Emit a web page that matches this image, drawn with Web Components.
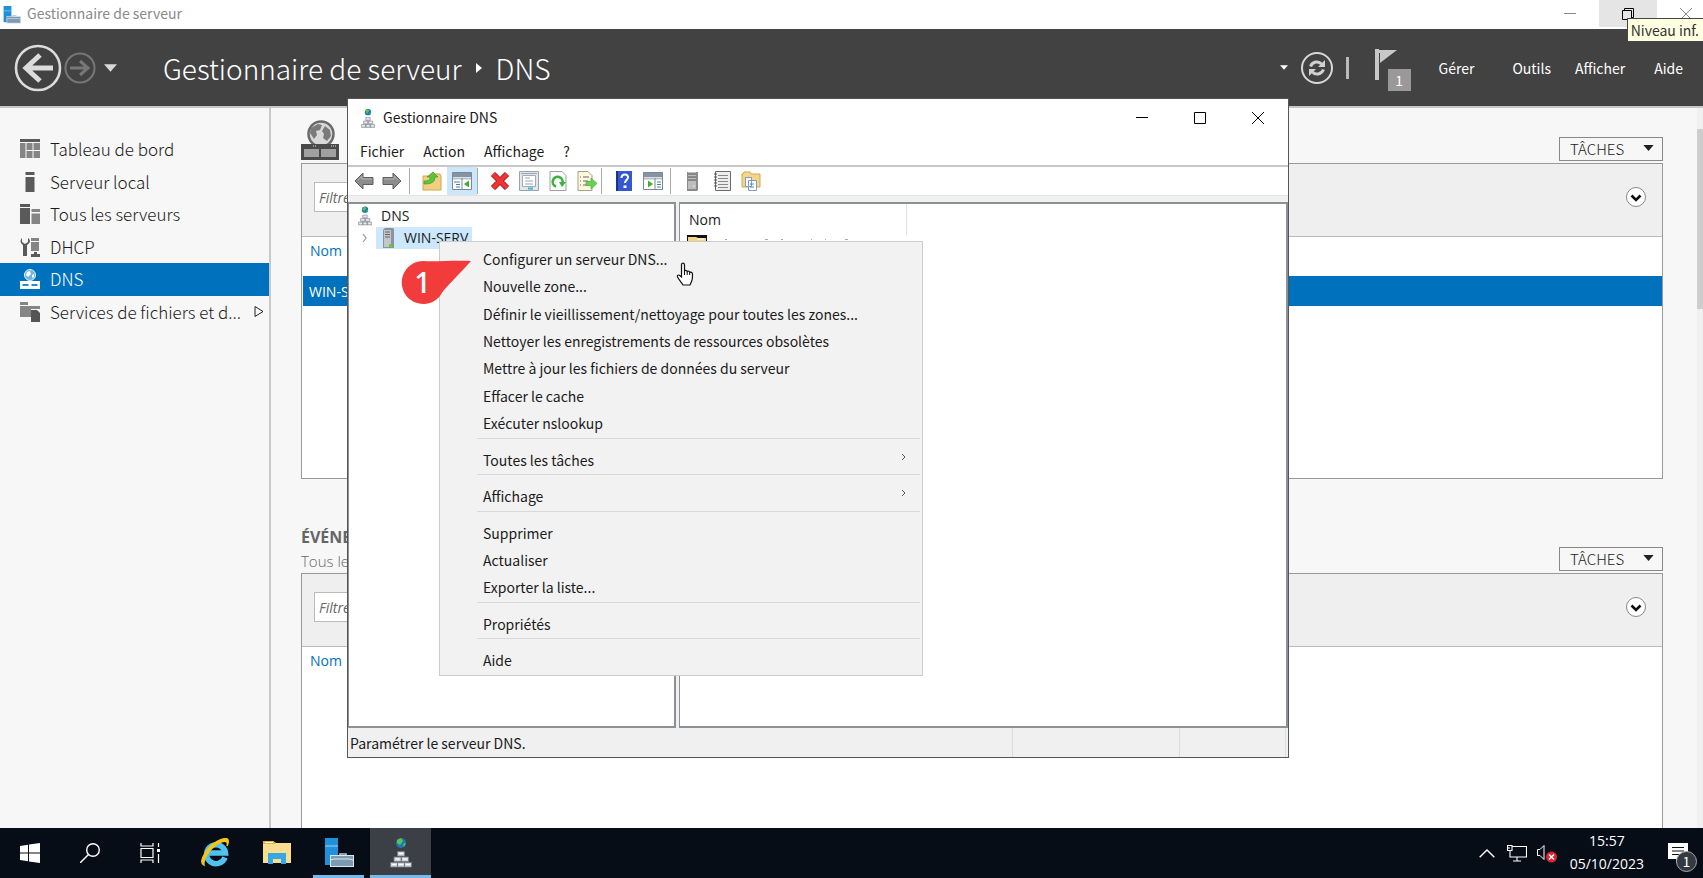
<!DOCTYPE html>
<html lang="fr">
<head>
<meta charset="utf-8">
<title>Gestionnaire de serveur</title>
<style>
html, body { margin: 0; height: 100%; overflow: hidden; }
body { --wide: "Open Sans", sans-serif; font-family: "Noto Sans CJK SC", "Open Sans", sans-serif; font-size: 14px; color: #1b1b1b; background: #f7f7f7; }
</style>
</head>
<body>
<desk-top></desk-top>
<script>
const ICONS = {
  toolbox: ['0 0 30 30', '<path d="M1 0h13v27H1z" fill="#1e90dc"/><path d="M1 8h13" stroke="#9fd3f5"/><path d="M16 18v-2h6v2" fill="none" stroke="#b9cad6" stroke-width="1.6"/><rect x="6.500" y="17.500" width="23" height="11" fill="#7d9bb0" stroke="#dbe6ee"/><path d="M6 22l4-1h16l3 1" fill="none" stroke="#dbe6ee"/>'],
  back: ['0 0 48 48', '<circle cx="24" cy="24" r="22" fill="none" stroke="#dcdcdc" stroke-width="2.600"/><path d="M39 24H13M26 11L12 24l14 13" fill="none" stroke="#dcdcdc" stroke-width="5"/>'],
  forward: ['0 0 32 32', '<circle cx="16" cy="16" r="14.500" fill="none" stroke="#777" stroke-width="2"/><path d="M6 16h17M16 9l8 7-8 7" fill="none" stroke="#777" stroke-width="3"/>'],
  caret: ['0 0 12 7', '<path d="M0 0h12L6 7z" fill="currentColor"/>'],
  crumb: ['0 0 6 10', '<path d="M0 0l6 5-6 5z" fill="#fff"/>'],
  refresh: ['0 0 32 32', '<circle cx="16" cy="16" r="15" fill="none" stroke="#d8d8d8" stroke-width="2"/><g fill="none" stroke="#d0d0d0" stroke-width="3"><path d="M9.500 14.500c2-5 8-6 11-2.500"/><path d="M22.500 17.500c-2 5-8 6-11 2.500"/></g><path d="M24 8v7h-7zM8 24v-7h7z" fill="#d0d0d0"/>'],
  flag: ['0 0 22 31', '<path d="M0 0h4v31H0z" fill="#c8c8c8"/><path d="M3 1h19L5 14V4H3z" fill="#c8c8c8"/>'],
  dashboard: ['0 0 20 20', '<path d="M0 0h20v3H0z" fill="#5a5a5a"/><path d="M0 4h5.500V19H0zM6.500 4h6v7h-6zM13.500 4H20v7h-6.500zM6.500 12h6v7h-6zM13.500 12H20v7h-6.500z" fill="#858585"/>'],
  local: ['0 0 20 20', '<path d="M5.500 0h9v3h-9zM5.500 5h9v15h-9z" fill="#5a5a5a"/>'],
  servers: ['0 0 20 20', '<path d="M0 0h10v3H0zM0 4h10v16H0z" fill="#5a5a5a"/><path d="M11.500 5H20v3h-8.500zM11.500 9.500H20V20h-8.500z" fill="#858585"/>'],
  dhcp: ['0 0 20 20', '<path d="M2 1v4l3 2 3-2V1c3 2 2.500 5-1 7v11H3V8C0 6 0 3 2 1z" fill="#5a5a5a"/><path d="M11 1h8v3h-8zM11 5h8v9h-8z" fill="#858585"/><path d="M14 15h3v2h3v3h-9v-3h3z" fill="#5a5a5a"/>'],
  dnsrole: ['0 0 20 20', '<circle cx="10" cy="6" r="5.500" fill="#6db4e6" stroke="#e8f4fc"/><path d="M7 3l3-1 1 3-3 3-2-2zM12 6l2-1v3l-2 1z" fill="#fff"/><path d="M0 12h20v8H0z" fill="#fff"/><path d="M2.500 16h6M11.500 16h6" stroke="#2b8bd0" stroke-width="2"/>'],
  files: ['0 0 20 20', '<path d="M0 0h8v3H0zM0 4h20v3h-9v8H0z" fill="#858585"/><path d="M11 8h6l3 3v9h-9z" fill="#555"/>'],
  expand: ['0 0 10 13', '<path d="M1 1.500l8 5-8 5z" fill="none" stroke="#222"/>'],
  globe: ['0 0 38 40', '<circle cx="20" cy="14" r="12.500" fill="#d8d8d8" stroke="#6a6a6a" stroke-width="2.500"/><path d="M10 8l7-4 4 1-2 5-4 1 1 4-3 4-4-6zM24 6l5 4 1 6-4 5-4-3 1-4-2-3z" fill="#7a7a7a"/><path d="M0 24h38v16H0z" fill="#4a4a4a"/><path d="M3 29h15v8H3zM20 29h15v8H20z" fill="#a0a0a0"/><path d="M12 26h4M30 26h5" stroke="#ddd" stroke-dasharray="1 1"/>'],
  chevron: ['0 0 20 20', '<circle cx="10" cy="10" r="9.500" fill="#fff" stroke="#888"/><path d="M5.500 8.500L10 13l4.500-4.500" fill="none" stroke="#111" stroke-width="2.600"/>'],
  min: ['0 0 12 12', '<path d="M0 5.500h12" stroke="currentColor"/>'],
  max: ['0 0 12 12', '<path d="M.5.5h11v11H.5z" fill="none" stroke="currentColor"/>'],
  restore: ['0 0 12 12', '<path d="M.5 2.500h9v9h-9zM2.500 2.500v-2h9v9h-2" fill="none" stroke="currentColor"/>'],
  close: ['0 0 12 12', '<path d="M0 0l12 12M12 0L0 12" stroke="currentColor"/>'],
  dns: ['0 0 22 30', '<circle cx="11" cy="5" r="5" fill="#1c78b8"/><path d="M7 2l4-2 2 3-3 4-3-2zM13 6l3-1-2 4z" fill="#5cc24a"/><g fill="#d3d6dc" stroke="#747986" stroke-width=".8"><path d="M7.500 13.500h7V18h-7zM4 19h7v4.500H4zM11.500 19h7v4.500h-7zM.5 24.500h7V29h-7zM7.500 24.500h7V29h-7zM14.500 24.500h7V29h-7z"/></g><path d="M9 15.500h4M5.500 21h4M13 21h4M2 26.500h4M9 26.500h4M16 26.500h4" stroke="#fff"/>'],
  tower: ['0 0 11 20', '<path d="M0 2l2-2h8l1 1v19H0z" fill="#8d9198"/><path d="M1 2h7v17H1z" fill="#c3c6ca"/><path d="M2 4h5M2 6.500h5M2 9h5" stroke="#5d6168"/><path d="M6 16h3v3H6z" fill="#54d62c"/>'],
  server: ['0 0 11 20', '<path d="M0 1h11v18l-1 1H0z" fill="#8a8a8a"/><path d="M1 1h8v17H1z" fill="#bdbdbd"/><path d="M1 3h8M1 6h8M1 9h8" stroke="#505050"/><path d="M6 15h2" stroke="#eee"/>'],
  left: ['0 0 20 20', '<path d="M1 10l8-8v4.500h10v7H9V18z" fill="#8c8c8c" stroke="#5e5e5e"/><path d="M4 9l4-3.500V8h10" fill="none" stroke="#b5b5b5"/>'],
  right: ['0 0 20 20', '<path d="M19 10l-8-8v4.500H1v7h10V18z" fill="#8c8c8c" stroke="#5e5e5e"/><path d="M2 8h10V5.500L16 9" fill="none" stroke="#b5b5b5"/>'],
  upfolder: ['0 0 20 20', '<path d="M1 5h8l2-2h7l1 2v14H1z" fill="#f0d080" stroke="#d0a850"/><path d="M2 10c5 0 6-1 6-4H5l6-5 5 5h-3c0 5-3 7-11 7z" fill="#5cc43c" stroke="#3f9a2b" stroke-width=".7"/>'],
  tree: ['0 0 20 20', '<path d="M.5 1.500h19v17H.5z" fill="#fff" stroke="#7b8794"/><path d="M1 2h18v4H1z" fill="#8593a3"/><path d="M1 7.500h18" stroke="#b5c0cb" stroke-width="2"/><path d="M10 7v12" stroke="#7b8794"/><path d="M2 11h6M4 13.500h4M4 16h4" stroke="#4b7cb0"/><path d="M17 9.500v7L12 13z" fill="#3fae2a"/>'],
  delete: ['0 0 20 20', '<path d="M3 3l14 14M17 3L3 17" stroke="#b81616" stroke-width="6"/><path d="M3 3l14 14M17 3L3 17" stroke="#ee3535" stroke-width="4"/>'],
  props: ['0 0 20 20', '<path d="M.5.5h19v19H.5z" fill="#e4e7ea" stroke="#9aa3ac"/><path d="M3.500 4.500h13v11h-13z" fill="#fff" stroke="#a0abb5"/><path d="M2 2.500h16" stroke="#9aa7b3"/><path d="M6 7h5M6 10h8M6 13h8" stroke="#9aa7b3"/><path d="M9 17.500h5" stroke="#35b6dc" stroke-width="2"/>'],
  reload: ['0 0 20 20', '<path d="M2 .5h12l4 4v15H2z" fill="#fafafa" stroke="#a0a0a0"/><path d="M8 15.500A5 5 0 1 1 14.500 12" fill="none" stroke="#3cb043" stroke-width="2.600"/><path d="M11 11h7l-4 5z" fill="#3cb043"/>'],
  export: ['0 0 20 20', '<path d="M1 .5h10l4 4v15H1z" fill="#fdf8df" stroke="#a79f7c"/><path d="M3 6h1M6 6h6M3 10h1M6 10h5M3 14h1M6 14h5" stroke="#666"/><path d="M9 10.500h5V7l6 5.500L14 18v-3.500H9z" fill="#6cd050" stroke="#48b034" stroke-width=".7"/>'],
  help: ['0 0 20 20', '<path d="M2 0h16v20H2z" fill="#3558cc"/><path d="M2 0h2v20H2z" fill="#17348f"/><path d="M7.500 7c0-5 7-4.500 6.500-.5-.3 2.500-3 2.500-3 5.500" fill="none" stroke="#fff" stroke-width="2"/><path d="M9.500 14.500h3v2.500h-3z" fill="#fff"/>'],
  pane: ['0 0 20 20', '<path d="M.5 1.500h19v17H.5z" fill="#fff" stroke="#7b8794"/><path d="M1 2h18v4H1z" fill="#8593a3"/><path d="M1 7.500h18" stroke="#b5c0cb" stroke-width="2"/><path d="M12 7v12" stroke="#7b8794"/><path d="M14 11h4M14 13.500h4M14 16h4" stroke="#4b7cb0"/><path d="M5 9.500v7l5-3.500z" fill="#3fae2a"/>'],
  list: ['0 0 20 20', '<path d="M3.500.5h15v19h-15z" fill="#eee" stroke="#6b6b6b"/><path d="M6 4.500h10M6 7.500h10M6 10.500h10M6 13.500h10M6 16.500h10" stroke="#888"/><path d="M2 3h3M2 6h3M2 9h3M2 12h3M2 15h3" stroke="#555"/>'],
  folderdoc: ['0 0 20 20', '<path d="M1 3h1l1-2h6l1 2h9v13H1z" fill="#f4d68a" stroke="#d0a850"/><path d="M4.500 6.500h6v9h-6zM7.500 9.500h8v10h-8z" fill="#fff" stroke="#7d9cc4"/><path d="M9 13h4M9 16h4" stroke="#4a86c7"/>'],
  twisty: ['0 0 5 8', '<path d="M1 0l3 4-3 4" fill="none" stroke="#999" stroke-width="1.200"/>'],
  sub: ['0 0 4 6', '<path d="M0 0l3 3-3 3" fill="none" stroke="#555"/>'],
  zone: ['0 0 20 20', '<path d="M0 0h20v20H0z" fill="#111"/><path d="M1 2h8l2 1h8v17H1z" fill="#f2d487"/><path d="M10 4h7" stroke="#fff"/>'],
  hand: ['0 0 18 24', '<path d="M6 1.500c1.500-.8 2.500 0 2.500 1.500v6c1-1 2.500-.5 2.700.6 1-.8 2.300-.3 2.500.8 1.200-.6 2.800 0 2.800 1.700 0 3 .3 5-1 7.500L14 23H7c-1.500-2.500-3.500-4.500-5.500-8-.7-1.800 1-2.500 2.200-1.500L5.500 15V3c0-.8 0-1.200.5-1.500z" fill="#fff" stroke="#111" stroke-width="1.200"/><path d="M8.500 9v4M11.200 9.800V13M13.700 10.500V13" stroke="#111"/>'],
  pin: ['0 0 72 46', '<path d="M70 2C50 1 38 3 22 2a21.500 21.500 0 1 0 17 35C44 28 56 18 70 2z" fill="#f23b3b"/>'],
  start: ['0 0 20 20', '<path d="M0 3l8-1.200v7.700H0zM9 1.600L20 0v9.500H9zM0 10.500h8v7.700L0 17zM9 10.500h11V20L9 18.400z" fill="#fff"/>'],
  search: ['0 0 20 20', '<circle cx="13" cy="7" r="6.300" fill="none" stroke="#fff" stroke-width="1.400"/><path d="M8.500 11.500L0 20" stroke="#fff" stroke-width="1.400"/>'],
  task: ['0 0 20 20', '<path d="M1 5.500h12v9H1zM1 0v3h12V0M1 20v-3h12v3M18.500 0v4M18.500 11v9" fill="none" stroke="#fff" stroke-width="1.200"/><path d="M17 6h3v3h-3z" fill="#fff"/>'],
  ie: ['0 0 30 30', '<path d="M25 19.500A9.500 9.500 0 1 1 25.500 15H8" fill="none" stroke="#4fc3ee" stroke-width="5.500"/><path d="M4 27C-3 24 8 8 18 3s12-2 9 5c2-7-5-5-11-1S3 20 4 27z" fill="#f5c518" stroke="#f5c518" stroke-width="1.400"/>'],
  folder: ['0 0 28 24', '<path d="M0 0h10l3 2h15v20H0z" fill="#f9de90"/><path d="M0 0h10l3 3H0z" fill="#e8b52f"/><path d="M2 1.500h8" stroke="#fff"/><path d="M5 12h18v11h-5v-5h-8v5H5z" fill="#35a7e4"/>'],
  up: ['0 0 16 9', '<path d="M.7 8.300L8 1l7.300 7.300" fill="none" stroke="#fff" stroke-width="1.400"/>'],
  network: ['0 0 20 17', '<path d="M5 1.500h14.500v10.500H3V6M.5.500h4.500v5H.5zM10 12v4M6 16h8M2 2v2" fill="none" stroke="#fff" stroke-width="1.100"/>'],
  sound: ['0 0 20 20', '<path d="M.5 6.500H3l4-4v14l-4-4H.5z" fill="none" stroke="#fff"/><circle cx="14.500" cy="14" r="5.500" fill="#dc2430"/><path d="M12 11.500l5 5M17 11.500l-5 5" stroke="#fff" stroke-width="1.500"/>'],
  note: ['0 0 20 20', '<path d="M0 0h20v16h-7l-5 4v-4H0z" fill="#fff"/><path d="M4 4.500h12M4 8h12M4 11.500h8" stroke="#111" stroke-width="1.200"/>'],
  tips: ['0 0 130 2', '<path d="M6 1.500h2M46 1.500h3M62 1.500h2M92 1.500h1M106 1.500h1M126 1.500h3" stroke="#aaa"/>']
};

function define(name, css, html) {
  const tpl = document.createElement('template');
  tpl.innerHTML = `<style>*{box-sizing:border-box}button,input,select{font:inherit;color:inherit;border:0;background:none;padding:0;margin:0}a{color:inherit;text-decoration:none}${css}</style>${html}`;
  customElements.define(name, class extends HTMLElement {
    constructor() {
      super();
      this.attachShadow({ mode: 'open' }).append(tpl.content.cloneNode(true));
    }
  });
}

customElements.define('ui-icon', class extends HTMLElement {
  connectedCallback() {
    if (this.shadowRoot) return;
    const [box, body] = ICONS[this.getAttribute('name')];
    const [w, h] = (this.getAttribute('size') || box.split(' ').slice(2).join(' ')).split(' ');
    this.attachShadow({ mode: 'open' }).innerHTML =
      `<style>:host{display:inline-flex;flex:none}svg{display:block}</style><svg width="${w}" height="${h || w}" viewBox="${box}" aria-hidden="true">${body}</svg>`;
  }
});

/* Server Manager */
define('window-title', `
:host{display:flex;height:29px;background:#fff;color:#8a8a8a;align-items:center;padding-left:3px;position:relative}
h1{font:inherit;margin:0 auto 0 6px;line-height:26px;align-self:flex-start}
.controls{display:flex;align-self:flex-start}
button{width:58px;height:27px;display:grid;place-items:center}
button.hot{background:#e5e5e5;color:#000}
button:last-child{width:46px;padding-left:12px}
.tip{position:absolute;right:0;top:18px;height:24px;line-height:22px;padding:0 4px 0 3px;background:#ffffe1;border:1px solid #444;border-right:0;color:#333;z-index:2}
`, `<ui-icon name="toolbox" size="18 18"></ui-icon><h1>Gestionnaire de serveur</h1>
<div class="controls"><button aria-label="Réduire"><ui-icon name="min"></ui-icon></button><button class="hot" aria-label="Niveau inférieur"><ui-icon name="restore"></ui-icon></button><button aria-label="Fermer"><ui-icon name="close"></ui-icon></button></div>
<div class="tip" role="tooltip">Niveau inf.</div>`);

define('nav-header', `
:host{display:flex;align-items:center;height:79px;background:#424242;color:#fff;border-bottom:2px solid #c6c6c6;padding:0 20px 0 14px}
.hist{display:flex;align-items:center;gap:2px}
.hist button,.tools button{display:flex}
.hist .drop{margin-left:6px;color:#d8d8d8}
.crumbs{display:flex;align-items:center;gap:14px;font-weight:300;font-size:28px;line-height:40px;margin:0 auto 0 46px}
.tools{display:flex;align-items:center;gap:13px}
.bar{width:3px;height:22px;background:#bbb}
.tools .flag{position:relative;width:36px;height:42px;margin:4px 0 0 13px}
.flag span{position:absolute;right:0;bottom:0;width:23px;height:22px;line-height:22px;text-align:center;background:#9a9899}
nav{display:flex;margin-left:28px}
nav a{margin-left:24px}nav a:first-child{margin:0 14px 0 0}nav a:last-child{margin-left:29px}
`, `<div class="hist"><button aria-label="Précédent"><ui-icon name="back"></ui-icon></button><button aria-label="Suivant"><ui-icon name="forward"></ui-icon></button><button class="drop" aria-label="Historique"><ui-icon name="caret" size="13 8"></ui-icon></button></div>
<div class="crumbs"><span>Gestionnaire de serveur</span><ui-icon name="crumb"></ui-icon><span>DNS</span></div>
<div class="tools"><button aria-label="Options"><ui-icon name="caret" size="8 5"></ui-icon></button><button aria-label="Actualiser"><ui-icon name="refresh"></ui-icon></button><i class="bar"></i>
<button class="flag" aria-label="Notifications"><ui-icon name="flag"></ui-icon><span>1</span></button></div>
<nav><a href="#">Gérer</a><a href="#">Outils</a><a href="#">Afficher</a><a href="#">Aide</a></nav>`);

define('nav-item', `
:host{display:flex;flex:1;align-items:center}
a{display:flex;flex:1;align-self:stretch;align-items:center;padding:0 5px 0 20px;gap:10px;font-weight:300;font-size:17px;line-height:24px;white-space:nowrap}
span{flex:1}
:host([selected]){background:#0072bd;color:#fff}
`, `<a href="#"><slot name="icon"></slot><span><slot></slot></span><slot name="more"></slot></a>`);

define('side-nav', `
:host{display:block;width:271px;flex:none;border-right:2px solid #c9c9c9;padding-top:25px;background:#f7f7f7}
nav{display:flex;flex-direction:column;height:195px}
`, `<nav>
<nav-item><ui-icon slot="icon" name="dashboard"></ui-icon>Tableau de bord</nav-item>
<nav-item><ui-icon slot="icon" name="local"></ui-icon>Serveur local</nav-item>
<nav-item><ui-icon slot="icon" name="servers"></ui-icon>Tous les serveurs</nav-item>
<nav-item><ui-icon slot="icon" name="dhcp"></ui-icon>DHCP</nav-item>
<nav-item selected><ui-icon slot="icon" name="dnsrole"></ui-icon>DNS</nav-item>
<nav-item><ui-icon slot="icon" name="files"></ui-icon>Services de fichiers et d...<ui-icon slot="more" name="expand"></ui-icon></nav-item>
</nav>`);

define('data-tile', `
:host{display:flex;flex-direction:column;flex:none}
header{display:flex;align-items:flex-end;justify-content:space-between;color:#666}
.tasks{display:flex;align-items:center;justify-content:space-between;width:104px;height:24px;border:1px solid #888;padding:0 7px 2px 10px;margin-bottom:2px;color:#222;font-weight:300;font-size:15px}
.frame{flex:1;border:1px solid #999;background:#fff}
.filter{display:flex;align-items:center;justify-content:space-between;height:73px;background:#efefef;border-bottom:1px solid #bbb;padding:0 16px 6px 12px}
input{width:260px;height:30px;border:1px solid #bbb;background:#fff;padding:0 4px;font-style:italic;font-family:var(--wide)}
input::placeholder{color:#666;opacity:1}
.filter button{display:flex}
`, `<header><slot name="head"></slot><button class="tasks">TÂCHES <ui-icon name="caret" size="13 6"></ui-icon></button></header>
<div class="frame"><div class="filter"><input placeholder="Filtrer" aria-label="Filtrer"><button aria-label="Développer"><ui-icon name="chevron"></ui-icon></button></div><slot></slot></div>`);

define('data-list', `
:host{display:block;padding-left:1px;font-family:var(--wide)}
table{width:100%;border-collapse:collapse}
th{height:39px;padding:0 7px;line-height:28px;vertical-align:top;text-align:left;font-weight:400;color:#0072bd}
td{height:30px;padding:0 6px;background:#0072bd;color:#fff}
:host([empty]) tbody{display:none}
`, `<table><thead><tr><th>Nom</th></tr></thead><tbody><tr><td>WIN-SERV</td></tr></tbody></table>`);

define('server-manager', `
:host{display:flex;flex-direction:column;min-height:0}
.body{display:flex;flex:1;min-height:0}
main{flex:1;padding:0 34px 0 30px;overflow:hidden;display:flex;flex-direction:column}
.one{height:371px}.two{height:440px}
.globe{display:flex;padding:12px 0 3px}
.head{height:94px;display:flex;flex-direction:column;justify-content:flex-end;font:300 15px/24px var(--wide)}
.head h2{margin:0;font-size:16px;font-weight:700;line-height:24px}
.scroll{width:6px;background:#f0f0f0;padding-top:21px}
.scroll i{display:block;height:180px;background:#cdcdcd}
`, `<window-title></window-title><nav-header></nav-header>
<div class="body"><side-nav></side-nav>
<main>
<data-tile class="one"><div slot="head" class="globe"><ui-icon name="globe"></ui-icon></div><data-list></data-list></data-tile>
<data-tile class="two"><div slot="head" class="head"><h2>ÉVÉNEMENTS</h2><span>Tous les événements</span></div><data-list empty></data-list></data-tile>
</main><div class="scroll"><i></i></div></div>`);

/* DNS console */
define('console-window', `
:host{display:flex;flex-direction:column;background:#fff;border:1px solid #555}
.title{display:flex;align-items:center;height:38px;padding:0 1px 0 13px}
.title h2{font:inherit;margin:0 auto 0 8px;padding-bottom:2px}
.title button{width:58px;height:30px;display:grid;place-items:center;color:#000}
.menu{display:flex;gap:19px;height:28px;padding:0 12px;line-height:28px}
.tools{display:flex;align-items:center;height:30px;border-top:2px solid #c8c8c8;padding-left:6px}
.tools button{display:flex;width:29px;height:28px;align-items:center;justify-content:center;flex:none}
.tools .first{width:20px}
.tools .second{width:35px}
.tools i{width:1px;height:26px;background:#aaa;flex:none}
.tools .up,.tools .on{width:30px}
.tools .on{background:#cce6fb}
.tools .g{margin-left:7px}
.tools .m{margin-left:3px}
.panes{display:flex;flex:1;gap:3px;background:#f0f0f0;border-top:1px solid #e3e3e3;padding-top:6px;min-height:0}
.pane{background:#fff;border:2px solid #8e9097;border-left-width:1px;overflow:hidden;font-family:var(--wide)}
.pane.t{width:328px}
.pane.l{flex:1}
.node{display:flex;align-items:center;line-height:22px;height:22px}
.root{padding-left:9px;gap:9px;height:23px}
.child{padding-left:13px;gap:9px}
.child span{display:flex;align-items:center;height:22px;padding:0 4px 0 7px;gap:10px;background:#cce8ff}
table{border-collapse:collapse}
th{height:31px;width:226px;text-align:left;font-weight:400;padding:0 0 0 9px;border-right:1px solid #e2e2e2}
td{padding:0 0 0 7px;vertical-align:top}
.zone{display:flex;gap:12px;align-items:flex-start}.zone ui-icon:last-child{margin-top:3px}
.status{display:flex;height:29px;background:#f0f0f0;line-height:31px;padding:0 2px 0 2px}
.status span:first-child{flex:1}
.status span{border-right:1px solid #dcdcdc}
.s1{width:167px}.s2{width:106px}
`, `<div class="title"><ui-icon name="dns" size="14 21"></ui-icon><h2>Gestionnaire DNS</h2><button aria-label="Réduire"><ui-icon name="min"></ui-icon></button><button aria-label="Agrandir"><ui-icon name="max"></ui-icon></button><button aria-label="Fermer"><ui-icon name="close"></ui-icon></button></div>
<div class="menu"><a href="#">Fichier</a><a href="#">Action</a><a href="#">Affichage</a><a href="#">?</a></div>
<div class="tools" role="toolbar">
<button class="first" aria-label="Précédent"><ui-icon name="left"></ui-icon></button><button class="second" aria-label="Suivant"><ui-icon name="right"></ui-icon></button><i></i>
<button class="g up" aria-label="Dossier parent"><ui-icon name="upfolder"></ui-icon></button><button class="on" aria-label="Arborescence"><ui-icon name="tree"></ui-icon></button><i></i>
<button class="g" aria-label="Supprimer"><ui-icon name="delete"></ui-icon></button><button aria-label="Propriétés"><ui-icon name="props"></ui-icon></button><button aria-label="Actualiser"><ui-icon name="reload"></ui-icon></button><button aria-label="Exporter"><ui-icon name="export"></ui-icon></button><i></i>
<button class="g" aria-label="Aide"><ui-icon name="help"></ui-icon></button><button aria-label="Volet Actions"><ui-icon name="pane"></ui-icon></button><i class="m"></i>
<button class="g" aria-label="Serveur"><ui-icon name="server"></ui-icon></button><button aria-label="Liste"><ui-icon name="list"></ui-icon></button><button aria-label="Zones"><ui-icon name="folderdoc"></ui-icon></button>
</div>
<div class="panes"><div class="pane t"><div class="node root"><ui-icon name="dns" size="14 20"></ui-icon>DNS</div><div class="node child"><ui-icon name="twisty"></ui-icon><span><ui-icon name="tower"></ui-icon>WIN-SERV</span></div></div>
<div class="pane l"><table><thead><tr><th>Nom</th></tr></thead><tbody><tr><td><div class="zone"><ui-icon name="zone"></ui-icon><ui-icon name="tips"></ui-icon></div></td></tr></tbody></table></div></div>
<div class="status"><span>Paramétrer le serveur DNS.</span><span class="s1"></span><span class="s2"></span></div>`);

define('menu-item', `
:host{display:flex;flex:1}
button{display:flex;flex:1;align-items:center;justify-content:space-between;padding:2px 16px 0 43px;white-space:nowrap;line-height:20px}
ui-icon{display:none;margin-top:-6px}
:host([submenu]) ui-icon{display:inline-flex}
`, `<button role="menuitem"><slot></slot><ui-icon name="sub"></ui-icon></button>`);
define('menu-line', `:host{display:block;height:9px;padding:2px 2px 0 37px}hr{border:0;height:1px;margin:0;background:#d9d9d9}`, `<hr>`);
define('context-menu', `:host{display:flex;flex-direction:column;background:#f2f2f2;border:1px solid #ccc;padding:2px 0}`, `<slot></slot>`);

define('step-pin', `:host{display:grid}ui-icon,span{grid-area:1/1}span{width:43px;text-align:center;color:#fff;font:600 28px/46px var(--wide)}`, `<ui-icon name="pin"></ui-icon><span><slot></slot></span>`);

/* Taskbar */
define('task-bar', `
:host{display:flex;height:50px;background:#060d17;color:#fff;padding-right:15px}
button{display:grid;place-items:center;height:50px}
.sys button{width:60px}
.sys,.apps,.tray{display:flex}
.apps{gap:1px;margin:0 auto 0 4px}
.apps button{width:61px}
.run{position:relative}
.run::after{content:"";position:absolute;left:5px;right:5px;bottom:0;height:3px;background:#76b9ed}
.act{background:#3c4046}.act::after{left:0;right:0}
.tray{align-items:center}
.tray .a{width:16px;margin-right:12px}.tray .b{width:20px;margin-right:10px}.tray .c{width:20px}
time{font-family:var(--wide);line-height:23px;text-align:center;margin:-2px 23px 0 13px}
time span{display:block}
.n{position:relative;width:21px}
.n b{position:absolute;left:9px;top:23px;width:21px;height:21px;border-radius:50%;background:#333a42;border:1px solid #aaa;font-weight:400;line-height:19px;text-align:center}
`, `<div class="sys"><button aria-label="Démarrer"><ui-icon name="start"></ui-icon></button><button aria-label="Rechercher"><ui-icon name="search"></ui-icon></button><button aria-label="Vue des tâches"><ui-icon name="task"></ui-icon></button></div>
<div class="apps"><button aria-label="Internet Explorer"><ui-icon name="ie"></ui-icon></button><button aria-label="Explorateur"><ui-icon name="folder"></ui-icon></button><button class="run" aria-label="Gestionnaire de serveur"><ui-icon name="toolbox"></ui-icon></button><button class="run act" aria-label="Gestionnaire DNS"><ui-icon name="dns"></ui-icon></button></div>
<div class="tray"><button class="a" aria-label="Icônes cachées"><ui-icon name="up"></ui-icon></button><button class="b" aria-label="Réseau"><ui-icon name="network"></ui-icon></button><button class="c" aria-label="Son"><ui-icon name="sound"></ui-icon></button>
<time><span>15:57</span><span>05/10/2023</span></time><button class="n" aria-label="Notifications"><ui-icon name="note"></ui-icon><b>1</b></button></div>`);

define('desk-top', `
:host{display:flex;flex-direction:column;height:100vh;position:relative;overflow:hidden}
server-manager{flex:1}
console-window,context-menu,step-pin,.cursor{position:absolute}
console-window{left:347px;top:98px;width:942px;height:660px}
context-menu{left:439px;top:241px;width:484px;height:435px}
step-pin{left:401px;top:259px}
.cursor{left:676px;top:262px}
`, `<server-manager></server-manager><task-bar></task-bar>
<console-window></console-window>
<context-menu role="menu">
<menu-item>Configurer un serveur DNS...</menu-item><menu-item>Nouvelle zone...</menu-item><menu-item>Définir le vieillissement/nettoyage pour toutes les zones...</menu-item><menu-item>Nettoyer les enregistrements de ressources obsolètes</menu-item><menu-item>Mettre à jour les fichiers de données du serveur</menu-item><menu-item>Effacer le cache</menu-item><menu-item>Exécuter nslookup</menu-item><menu-line></menu-line>
<menu-item submenu>Toutes les tâches</menu-item><menu-line></menu-line><menu-item submenu>Affichage</menu-item><menu-line></menu-line>
<menu-item>Supprimer</menu-item><menu-item>Actualiser</menu-item><menu-item>Exporter la liste...</menu-item><menu-line></menu-line><menu-item>Propriétés</menu-item><menu-line></menu-line><menu-item>Aide</menu-item>
</context-menu>
<step-pin>1</step-pin><ui-icon class="cursor" name="hand"></ui-icon>`);
</script>
</body>
</html>
